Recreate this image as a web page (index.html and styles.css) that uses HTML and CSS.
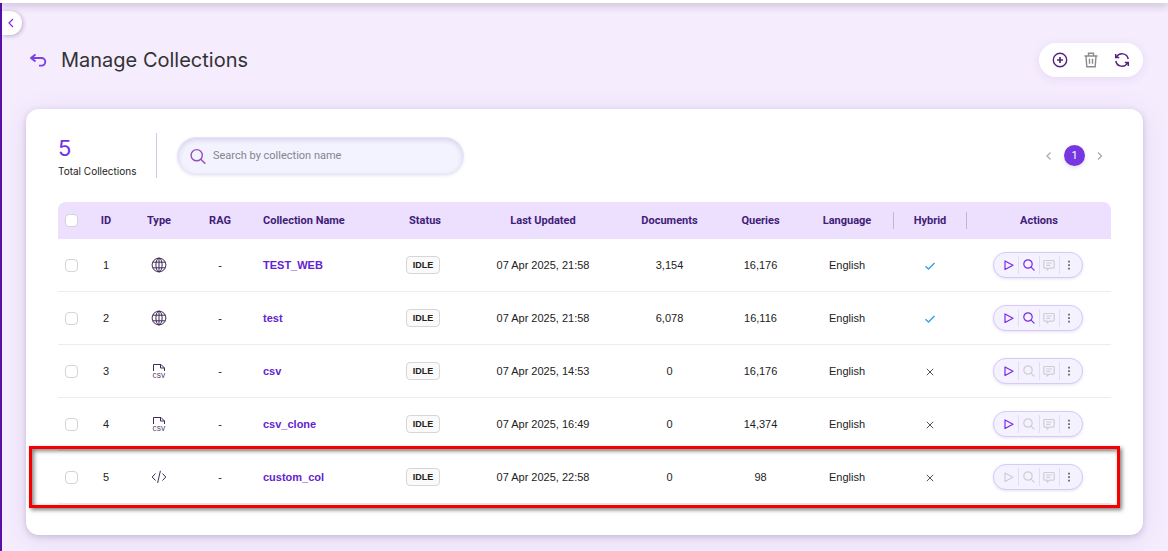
FILE: index.html
```html
<!DOCTYPE html>
<html lang="en">
<head>
<meta charset="utf-8">
<title>Manage Collections</title>
<link rel="stylesheet" href="styles.css">
</head>
<body>
<svg class="defs" aria-hidden="true">
  <symbol id="globe" viewBox="0 0 16 16"><g fill="none" stroke="currentColor"><circle cx="8" cy="8" r="6.9"/><ellipse cx="8" cy="8" rx="3.1" ry="6.9"/><path d="M8 1v14M1.6 5.2h12.8M1.6 10.8h12.8"/></g></symbol>
  <symbol id="csv" viewBox="0 0 16 16"><path d="M2.500 8V1.500h7.500L13.500 5V8M9.500 1.500v3.500h4" fill="none" stroke="currentColor"/></symbol>
  <symbol id="code" viewBox="0 0 16 16"><path d="M4.500 4.500L1.200 8l3.300 3.500M11.500 4.500L14.800 8l-3.300 3.500M9.400 1.800L6.600 14" fill="none" stroke="currentColor"/></symbol>
  <symbol id="play" viewBox="0 0 12 12"><path d="M2 2v8.500L10 6.250z" fill="none" stroke="currentColor" stroke-width="1.200" stroke-linejoin="round"/></symbol>
  <symbol id="search" viewBox="0 0 12 12"><g fill="none" stroke="currentColor" stroke-width="1.200" stroke-linecap="round"><circle cx="5" cy="5" r="4.200"/><path d="M8.100 8.100l3 3"/></g></symbol>
  <symbol id="chat" viewBox="0 0 12 12"><path d="M1.600 1.500h8.800q.8 0 .8.800v6q0 .8-.8.800H6.200L4.200 11V9.100H1.600q-.8 0-.8-.8v-6q0-.8.800-.8zM3.200 4h5.600M3.200 6.300h4" fill="none" stroke="currentColor" stroke-width="1.200" stroke-linejoin="round"/></symbol>
  <symbol id="dots" viewBox="0 0 12 12"><path d="M5.200 1.800h1.600v1.600H5.200zM5.200 5.300h1.600v1.600H5.200zM5.200 8.800h1.600v1.600H5.200z" fill="currentColor"/></symbol>
  <symbol id="check" viewBox="0 0 12 12"><path d="M1.500 7.300l3 2.700 6-6" fill="none" stroke="currentColor" stroke-width="1.500"/></symbol>
  <symbol id="cross" viewBox="0 0 12 12"><path d="M2.800 3.800l6.400 6.400M9.200 3.800L2.800 10.200" fill="none" stroke="currentColor"/></symbol>
</svg>

<div class="topbar"></div>
<div class="shell">
  <button class="collapse" aria-label="Expand sidebar"><svg viewBox="0 0 10 10" width="10" height="10"><path d="M7 1L3 5l4 4" fill="none" stroke="currentColor" stroke-width="1.200"/></svg></button>
  <main class="page">
    <header class="page-head">
      <button class="back" aria-label="Back"><svg viewBox="0 0 18 16" width="18" height="16"><path d="M6.500 2.500L2 6l4.500 3.500M2.200 6H12.500a3.700 3.700 0 0 1 0 7.600H10" fill="none" stroke="currentColor" stroke-width="1.900" stroke-linejoin="round"/></svg></button>
      <h1 class="title">Manage Collections</h1>
      <div class="toolbar">
        <button class="tool" aria-label="Add"><svg viewBox="0 0 16 16" width="16" height="16"><g fill="none" stroke="currentColor" stroke-width="1.400"><circle cx="8" cy="8" r="6.700"/><path d="M8 5v6M5 8h6" stroke-width="1.700"/></g></svg></button>
        <button class="tool tool-muted" aria-label="Delete"><svg viewBox="0 0 16 16" width="16" height="16"><path d="M1.500 4h13M3 4l.8 10.800h8.400L13 4M5.500 4V1.200h5V4M6.500 6.800v5M9.500 6.800v5" fill="none" stroke="currentColor" stroke-width="1.400"/></svg></button>
        <button class="tool" aria-label="Refresh"><svg viewBox="0 0 16 16" width="16" height="16"><path d="M14.200 7A6.300 6.300 0 0 0 2.500 5M1.800 9A6.300 6.300 0 0 0 13.500 11" fill="none" stroke="currentColor" stroke-width="1.500"/><path d="M1.700 2v3.500h3.500M14.300 14v-3.500h-3.500" fill="none" stroke="currentColor" stroke-width="1.500"/><path d="M1.500 3l3 2.800h-3zM14.500 13l-3-2.800h3z" fill="currentColor"/></svg></button>
      </div>
    </header>

    <section class="card">
      <div class="summary">
        <div class="total"><span class="total-num">5</span><span class="total-label">Total Collections</span></div>
        <label class="search"><svg class="search-icon" viewBox="0 0 16 16" width="16" height="16"><g fill="none" stroke="currentColor" stroke-width="1.400" stroke-linecap="round"><circle cx="6.700" cy="7.200" r="5.600"/><path d="M10.800 11.300l4 4"/></g></svg><input type="text" aria-label="Search collections" placeholder="Search by collection name"></label>
        <nav class="pager" aria-label="Pages">
          <button class="pager-step" aria-label="Previous"><svg viewBox="0 0 10 10" width="10" height="10"><path d="M6.500 1.500L3 5l3.500 3.500" fill="none" stroke="currentColor" stroke-width="1.300"/></svg></button>
          <button class="pager-page">1</button>
          <button class="pager-step" aria-label="Next"><svg viewBox="0 0 10 10" width="10" height="10"><path d="M3 1.500L6.500 5 3 8.500" fill="none" stroke="currentColor" stroke-width="1.300"/></svg></button>
        </nav>
      </div>

      <div class="table-wrap">
        <table class="grid">
          <colgroup><col class="c-check"><col class="c-id"><col class="c-type"><col class="c-rag"><col class="c-name"><col class="c-status"><col class="c-date"><col class="c-docs"><col class="c-queries"><col class="c-lang"><col class="c-hybrid"><col class="c-actions"></colgroup>
          <thead>
            <tr><th><input type="checkbox" class="box" aria-label="Select all"></th><th>ID</th><th>Type</th><th>RAG</th><th class="name">Collection Name</th><th>Status</th><th>Last Updated</th><th>Documents</th><th>Queries</th><th>Language</th><th><span class="ruled">Hybrid</span></th><th>Actions</th></tr>
          </thead>
          <tbody>
            <tr><td><input type="checkbox" class="box" aria-label="Select TEST_WEB"></td><td>1</td><td><svg class="type"><use href="#globe"/></svg></td><td>-</td><td class="name"><a href="#">TEST_WEB</a></td><td class="status"><span class="badge">IDLE</span></td><td>07 Apr 2025, 21:58</td><td>3,154</td><td>16,176</td><td>English</td><td><svg class="mark yes"><use href="#check"/></svg></td>
              <td class="act"><div class="actions"><button aria-label="Run"><svg><use href="#play"/></svg></button><button aria-label="Search"><svg><use href="#search"/></svg></button><button aria-label="Chat" disabled><svg><use href="#chat"/></svg></button><button class="more" aria-label="More"><svg><use href="#dots"/></svg></button></div></td></tr>
            <tr><td><input type="checkbox" class="box" aria-label="Select test"></td><td>2</td><td><svg class="type"><use href="#globe"/></svg></td><td>-</td><td class="name"><a href="#">test</a></td><td class="status"><span class="badge">IDLE</span></td><td>07 Apr 2025, 21:58</td><td>6,078</td><td>16,116</td><td>English</td><td><svg class="mark yes"><use href="#check"/></svg></td>
              <td class="act"><div class="actions"><button aria-label="Run"><svg><use href="#play"/></svg></button><button aria-label="Search"><svg><use href="#search"/></svg></button><button aria-label="Chat" disabled><svg><use href="#chat"/></svg></button><button class="more" aria-label="More"><svg><use href="#dots"/></svg></button></div></td></tr>
            <tr><td><input type="checkbox" class="box" aria-label="Select csv"></td><td>3</td><td><svg class="type" viewBox="0 0 16 16"><use href="#csv"/><text x="1.500" y="15" class="csv-label">CSV</text></svg></td><td>-</td><td class="name"><a href="#">csv</a></td><td class="status"><span class="badge">IDLE</span></td><td>07 Apr 2025, 14:53</td><td>0</td><td>16,176</td><td>English</td><td><svg class="mark"><use href="#cross"/></svg></td>
              <td class="act"><div class="actions"><button aria-label="Run"><svg><use href="#play"/></svg></button><button aria-label="Search" disabled><svg><use href="#search"/></svg></button><button aria-label="Chat" disabled><svg><use href="#chat"/></svg></button><button class="more" aria-label="More"><svg><use href="#dots"/></svg></button></div></td></tr>
            <tr><td><input type="checkbox" class="box" aria-label="Select csv_clone"></td><td>4</td><td><svg class="type" viewBox="0 0 16 16"><use href="#csv"/><text x="1.500" y="15" class="csv-label">CSV</text></svg></td><td>-</td><td class="name"><a href="#">csv_clone</a></td><td class="status"><span class="badge">IDLE</span></td><td>07 Apr 2025, 16:49</td><td>0</td><td>14,374</td><td>English</td><td><svg class="mark"><use href="#cross"/></svg></td>
              <td class="act"><div class="actions"><button aria-label="Run"><svg><use href="#play"/></svg></button><button aria-label="Search" disabled><svg><use href="#search"/></svg></button><button aria-label="Chat" disabled><svg><use href="#chat"/></svg></button><button class="more" aria-label="More"><svg><use href="#dots"/></svg></button></div></td></tr>
            <tr><td><input type="checkbox" class="box" aria-label="Select custom_col"></td><td>5</td><td><svg class="type"><use href="#code"/></svg></td><td>-</td><td class="name"><a href="#">custom_col</a></td><td class="status"><span class="badge">IDLE</span></td><td>07 Apr 2025, 22:58</td><td>0</td><td>98</td><td>English</td><td><svg class="mark"><use href="#cross"/></svg></td>
              <td class="act"><div class="actions"><button aria-label="Run" disabled><svg><use href="#play"/></svg></button><button aria-label="Search" disabled><svg><use href="#search"/></svg></button><button aria-label="Chat" disabled><svg><use href="#chat"/></svg></button><button class="more" aria-label="More"><svg><use href="#dots"/></svg></button></div></td></tr>
          </tbody>
        </table>
        <div class="highlight"></div>
      </div>
    </section>
  </main>
</div>
</body>
</html>
```
FILE: styles.css
```css
* { box-sizing: border-box; }

body {
  margin: 0;
  display: flex;
  flex-direction: column;
  min-height: 100vh;
  background: #f5ecfe;
  color: #222;
  font-family: "Liberation Sans", Arial, sans-serif;
  font-size: 11px;
}

button {
  border: 0;
  padding: 0;
  background: none;
  color: inherit;
  font: inherit;
  display: flex;
  align-items: center;
  justify-content: center;
}

.defs { position: absolute; width: 0; height: 0; }

.topbar {
  height: 3px;
  background: #fff;
  box-shadow: 0 1px 9px rgba(50, 30, 70, 0.5);
  z-index: 1;
}

.shell {
  position: relative;
  flex: 1;
  border-left: 2px solid #5a0fa8;
}

.collapse {
  position: absolute;
  left: 0;
  top: 8px;
  width: 20px;
  height: 24px;
  padding-right: 3px;
  border-radius: 0 12px 12px 0;
  background: #fff;
  color: #8a2be2;
  box-shadow: 1px 1px 4px rgba(60, 30, 90, 0.3);
}

.page { padding: 40px 25px 16px 24px; }

.page-head {
  display: flex;
  align-items: center;
  height: 34px;
  margin-bottom: 32px;
  padding-left: 3px;
}

.back { color: #7b3fe4; }

.title {
  margin: 0 auto 0 14px;
  color: #333;
  font: 400 20px/34px Inter, sans-serif;
}

.toolbar {
  display: flex;
  align-items: center;
  gap: 15px;
  height: 34px;
  padding: 0 13px;
  border-radius: 17px;
  background: #fff;
  color: #562480;
  box-shadow: 0 2px 10px rgba(110, 60, 170, 0.1);
}

.tool-muted { color: #8b8b8b; }

.card {
  padding: 24px 32px 31px;
  border-radius: 13px;
  background: #fff;
  box-shadow: 0 2px 6px rgba(70, 40, 110, 0.22), 0 4px 30px rgba(70, 40, 110, 0.08);
}

.summary {
  display: flex;
  align-items: center;
  gap: 20px;
  height: 45px;
  margin-bottom: 24px;
}

.total {
  display: flex;
  flex-direction: column;
  width: 99px;
  height: 45px;
  border-right: 1px solid #d6c6e6;
  font-family: Inter, sans-serif;
}

.total-num { color: #7132e0; font-size: 22px; line-height: 30px; }
.total-label { color: #222; font-size: 10px; line-height: 16px; }

.search {
  display: flex;
  align-items: center;
  gap: 7px;
  width: 287px;
  height: 38px;
  padding: 0 12px;
  border: 1px solid #e8e4f8;
  border-radius: 19px;
  background: #f3f2ff;
  box-shadow: inset 0 2px 5px rgba(90, 80, 150, 0.2), 0 1px 3px rgba(90, 80, 150, 0.12);
}

.search-icon { flex: none; color: #9350b8; }

.search input {
  flex: 1;
  min-width: 0;
  padding: 0;
  border: 0;
  outline: 0;
  background: none;
  font: 11px/16px Roboto, sans-serif;
}

.search input::placeholder { color: #86838e; opacity: 1; }

.pager {
  display: flex;
  align-items: center;
  gap: 10px;
  margin-left: auto;
  padding-right: 6px;
}

.pager-step { color: #aaa; }

.pager-page {
  width: 21px;
  height: 21px;
  border-radius: 50%;
  background: #7636e2;
  color: #fff;
  font: 11px Roboto, sans-serif;
  box-shadow: 0 2px 4px rgba(70, 40, 110, 0.15);
}

.table-wrap { position: relative; }

.grid {
  width: 100%;
  table-layout: fixed;
  border-collapse: separate;
  border-spacing: 0;
  text-align: center;
}

.c-check { width: 27px; }
.c-id { width: 42px; }
.c-type { width: 64px; }
.c-rag { width: 58px; }
.c-name { width: 134px; }
.c-status { width: 84px; }
.c-date { width: 152px; }
.c-docs { width: 101px; }
.c-queries { width: 81px; }
.c-lang { width: 92px; }
.c-hybrid { width: 74px; }
.c-actions { width: 144px; }

.grid th {
  height: 37px;
  padding: 0;
  background: #eddffe;
  color: #401d78;
  font: 700 11px/17px Roboto, sans-serif;
}

.grid th:first-child { border-top-left-radius: 8px; }
.grid th:last-child { border-top-right-radius: 8px; }

.grid td {
  height: 53px;
  padding: 0;
  border-bottom: 1px solid #ececec;
}

.grid .name { padding-left: 14px; text-align: left; }
.grid .status { padding-right: 4px; }
.grid .act { padding-right: 2px; }

.ruled {
  display: block;
  border: solid #c3b2d9;
  border-width: 0 1px;
}

.name a { color: #6423d0; font-weight: 700; text-decoration: none; }

.grid svg { display: block; margin: 0 auto; }

.grid .type { width: 16px; height: 16px; color: #3f2b56; }

.csv-label { font: 7px "Liberation Mono", monospace; fill: #3f2b56; }

.mark { width: 12px; height: 12px; color: #555; }
.mark.yes { color: #38a4e0; }

.box {
  appearance: none;
  display: block;
  width: 13px;
  height: 13px;
  margin: 0 auto;
  border: 1px solid #d4d4d8;
  border-radius: 4px;
  background: #fff;
}

.badge {
  display: inline-block;
  padding: 0 6px;
  border: 1px solid #d6d6d6;
  border-radius: 4px;
  background: #fafafa;
  color: #222;
  font-size: 9px;
  font-weight: 700;
  line-height: 16px;
}

.actions {
  display: flex;
  align-items: center;
  width: 90px;
  height: 26px;
  margin: 0 auto;
  padding: 0 3px 0 5px;
  border: 1px solid #d9c8fb;
  border-radius: 13px;
  background: #f4f2ff;
  color: #7a2ae8;
  box-shadow: 0 1px 3px rgba(80, 50, 140, 0.15);
}

.actions button { flex: 1; height: 18px; }
.actions button + button { border-left: 1px solid #e2dcf6; }
.actions button:disabled { color: #cfcdd6; }
.actions .more { color: #555; }
.actions svg { width: 12px; height: 12px; }

.highlight {
  position: absolute;
  left: -29px;
  right: -9px;
  bottom: -4px;
  height: 62px;
  border: 3px solid #f50000;
  box-shadow: 2px 2px 4px rgba(0, 0, 0, 0.5), inset 2px 2px 4px rgba(0, 0, 0, 0.5);
  pointer-events: none;
}
```
